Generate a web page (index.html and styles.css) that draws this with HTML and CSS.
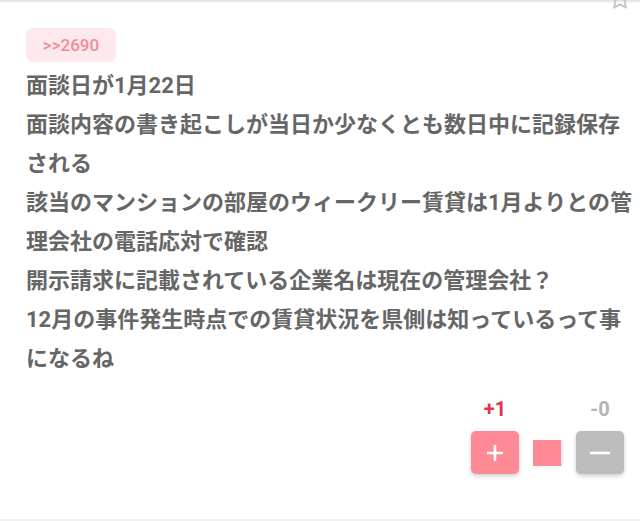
FILE: index.html
```html
<!DOCTYPE html>
<html lang="ja">
<head>
<meta charset="utf-8">
<link rel="stylesheet" href="styles.css">
</head>
<body>
<div class="top-shade"></div>
<div class="post">
  <svg class="star" width="24" height="24" viewBox="0 0 24 24"><path d="M12 2.5l2.9 6.1 6.6.8-4.9 4.6 1.3 6.6L12 17.3l-5.9 3.3 1.3-6.6-4.9-4.6 6.6-.8z" fill="none" stroke="#c8c8c8" stroke-width="2" stroke-linejoin="round"/></svg>
  <div class="anchor">&gt;&gt;2690</div>
  <div class="text">面談日が1月22日<br>面談内容の書き起こしが当日か少なくとも数日中に記録保存される<br>該当のマンションの部屋のウィークリー賃貸は1月よりとの管理会社の電話応対で確認<br>開示請求に記載されている企業名は現在の管理会社？<br>12月の事件発生時点での賃貸状況を県側は知っているって事になるね</div>
  <div class="votes">
    <div class="vote">
      <div class="count good">+1</div>
      <button class="btn btn-good"><svg width="20" height="20" viewBox="0 0 20 20"><path d="M10 2v16M2 10h16" stroke="#fff" stroke-width="2.6"/></svg></button>
    </div>
    <div class="bar"><div class="bar-fill" style="width:100%"></div></div>
    <div class="vote">
      <div class="count bad">-0</div>
      <button class="btn btn-bad"><svg width="22" height="20" viewBox="0 0 22 20"><path d="M1 10h20" stroke="#fff" stroke-width="2.6"/></svg></button>
    </div>
  </div>
</div>
<div class="bottom-line"></div>
</body>
</html>
```

FILE: styles.css
```css
html, body {
  margin: 0;
  padding: 0;
  background: #fff;
}
body {
  width: 640px;
  height: 521px;
  overflow: hidden;
  font-family: Roboto, "Noto Sans CJK JP", sans-serif;
}
.top-shade {
  height: 3px;
  background: linear-gradient(#dedede, #fff);
}
.post {
  position: relative;
  padding: 25px 0 0 26px;
  height: 491px;
  box-sizing: border-box;
}
.star {
  position: absolute;
  top: -16px;
  right: 8px;
}
.anchor {
  display: inline-flex;
  align-items: center;
  justify-content: center;
  width: 90px;
  height: 34px;
  border-radius: 7px;
  background: #fde9ec;
  color: #f08d9a;
  font-size: 17px;
  font-weight: 500;
}
.text {
  margin-top: 4px;
  font-size: 22px;
  line-height: 39px;
  font-weight: 700;
  color: #666;
}
.votes {
  display: flex;
  justify-content: flex-end;
  align-items: flex-end;
  padding-right: 16px;
  margin-top: 20px;
}
.vote {
  display: flex;
  flex-direction: column;
  align-items: center;
  width: 48px;
}
.count {
  font-size: 20px;
  line-height: 22px;
  font-weight: 700;
  margin-bottom: 11px;
}
.good { color: #e0364e; }
.bad { color: #b4b4b4; }
.btn {
  width: 48px;
  height: 43px;
  border: none;
  border-radius: 5px;
  padding: 0;
  display: flex;
  align-items: center;
  justify-content: center;
  box-shadow: 0 2px 4px rgba(0,0,0,0.2);
}
.btn-good { background: #ff8995; }
.btn-bad { background: #bdbdbd; }
.bar {
  width: 28px;
  height: 26px;
  margin: 0 15px 8px 14px;
  background: #e4e4e4;
  box-shadow: 2px 0 1px rgba(0,0,0,0.08);
}
.bar-fill {
  height: 100%;
  background: #ff8995;
}
.bottom-line {
  height: 2px;
  background: #efefef;
  margin-top: 25px;
}
```
